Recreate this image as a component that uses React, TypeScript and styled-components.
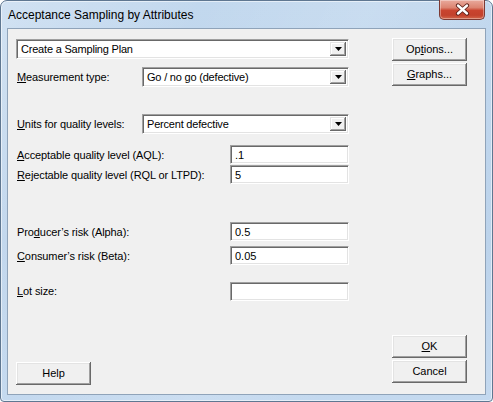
import React from 'react';
import styled, { createGlobalStyle } from 'styled-components';

const Global = createGlobalStyle`
  html, body { margin: 0; padding: 0; background: #ffffff; }
  body { width: 493px; height: 402px; overflow: hidden; }
  * { box-sizing: border-box; }
`;

const Window = styled.div`
  width: 493px;
  height: 402px;
  border: 1px solid #5f7791;
  border-radius: 7px 7px 4px 4px;
  background:
    linear-gradient(115deg, rgba(255,255,255,0.25) 0%, rgba(255,255,255,0) 30%, rgba(255,255,255,0.12) 55%, rgba(255,255,255,0) 75%),
    linear-gradient(180deg, #c2d8ee 0%, #bcd3eb 60%, #c4d9ef 100%);
  display: flex;
  flex-direction: column;
  font-family: "Liberation Sans", Arial, sans-serif;
  color: #000;
  box-shadow: inset 0 0 0 1px rgba(255,255,255,0.55);
`;

const TitleBar = styled.div`
  height: 27px;
  display: flex;
  align-items: flex-start;
  padding-left: 7px;
`;

const Title = styled.div`
  flex: 1;
  height: 27px;
  display: flex;
  align-items: center;
  padding-top: 1px;
  font-size: 12px;
  color: #000;
`;

const CloseButton = styled.div`
  width: 46px;
  height: 20px;
  margin-top: -1px;
  margin-right: 7px;
  border: 1px solid #7d3a33;
  border-top: none;
  border-radius: 0 0 5px 5px;
  background: linear-gradient(180deg, #e9aa9d 0%, #dc8471 40%, #c9442f 55%, #c3412c 80%, #d2664a 100%);
  box-shadow: inset 0 0 0 1px rgba(255,255,255,0.35);
  display: flex;
  align-items: center;
  justify-content: center;
`;

const Client = styled.div`
  flex: 1;
  margin: 0 6px 6px 6px;
  border: 1px solid #8fa3b9;
  background: #f0f0f0;
  display: flex;
  justify-content: space-between;
  padding: 9px 18px 9px 8px;
`;

const LeftPane = styled.div`
  width: 333px;
  display: flex;
  flex-direction: column;
`;

const RightPane = styled.div`
  width: 75px;
  display: flex;
  flex-direction: column;
  gap: 2px;
  padding-bottom: 2px;
`;

const Row = styled.div<{ $top: number; $h?: number }>`
  display: flex;
  align-items: center;
  height: ${p => p.$h ?? 20}px;
  margin-top: ${p => p.$top}px;
`;

const Label = styled.div`
  flex: 1;
  font-size: 11px;
  letter-spacing: -0.1px;
  padding-left: 1px;
  white-space: nowrap;
`;

const Key = styled.span`
  text-decoration: underline;
  text-underline-offset: 1px;
`;

const sunken = `
  background: #ffffff;
  border-top: 1px solid #a0a0a0;
  border-left: 1px solid #a0a0a0;
  border-bottom: 1px solid #ffffff;
  border-right: 1px solid #ffffff;
  box-shadow: inset 1px 1px 0 #696969, inset -1px -1px 0 #e3e3e3;
`;

const Combo = styled.div<{ $w: number }>`
  ${sunken}
  width: ${p => p.$w}px;
  height: 20px;
  display: flex;
  align-items: stretch;
  padding: 2px;
`;

const ComboText = styled.div`
  flex: 1;
  font-size: 11px;
  letter-spacing: -0.2px;
  display: flex;
  align-items: center;
  padding-left: 2px;
  white-space: nowrap;
`;

const ComboArrow = styled.div`
  width: 16px;
  background: #f0f0f0;
  box-shadow: inset -1px -1px 0 #696969, inset 1px 1px 0 #e3e3e3, inset -2px -2px 0 #a0a0a0, inset 2px 2px 0 #ffffff;
  display: flex;
  align-items: center;
  justify-content: center;
`;

const TextBox = styled.div`
  ${sunken}
  width: 119px;
  height: 19px;
  font-size: 11px;
  display: flex;
  align-items: center;
  padding-left: 4px;
`;

const Button = styled.div`
  width: 75px;
  height: 23px;
  background: #f0f0f0;
  box-shadow: inset -1px -1px 0 #696969, inset 1px 1px 0 #ffffff, inset -2px -2px 0 #a0a0a0, inset 2px 2px 0 #e3e3e3;
  font-size: 11px;
  display: flex;
  align-items: center;
  justify-content: center;
  padding-bottom: 1px;
`;

const Spacer = styled.div`
  flex: 1;
`;

const Arrow = () => (
  <svg width="7" height="4" viewBox="0 0 7 4">
    <path d="M0 0 H7 L3.5 4 Z" fill="#000" />
  </svg>
);

const CloseGlyph = () => (
  <svg width="15" height="13" viewBox="0 0 15 13">
    <path d="M3 2.5 L12 10.5 M12 2.5 L3 10.5" stroke="#5a1f18" strokeWidth="4.2" strokeLinecap="round" />
    <path d="M3 2.5 L12 10.5 M12 2.5 L3 10.5" stroke="#ffffff" strokeWidth="2.4" strokeLinecap="round" />
  </svg>
);

const Dropdown: React.FC<{ w: number; text: string }> = ({ w, text }) => (
  <Combo $w={w}>
    <ComboText>{text}</ComboText>
    <ComboArrow>
      <Arrow />
    </ComboArrow>
  </Combo>
);

export default function App() {
  return (
    <>
      <Global />
      <Window>
        <TitleBar>
          <Title>Acceptance Sampling by Attributes</Title>
          <CloseButton>
            <CloseGlyph />
          </CloseButton>
        </TitleBar>
        <Client>
          <LeftPane>
            <Row $top={1}>
              <Dropdown w={333} text="Create a Sampling Plan" />
            </Row>
            <Row $top={8}>
              <Label><Key>M</Key>easurement type:</Label>
              <Dropdown w={207} text="Go / no go (defective)" />
            </Row>
            <Row $top={27}>
              <Label><Key>U</Key>nits for quality levels:</Label>
              <Dropdown w={207} text="Percent defective" />
            </Row>
            <Row $top={11} $h={19}>
              <Label><Key>A</Key>cceptable quality level (AQL):</Label>
              <TextBox>.1</TextBox>
            </Row>
            <Row $top={1} $h={19}>
              <Label><Key>R</Key>ejectable quality level (RQL or LTPD):</Label>
              <TextBox>5</TextBox>
            </Row>
            <Row $top={38} $h={19}>
              <Label>Pro<Key>d</Key>ucer’s risk (Alpha):</Label>
              <TextBox>0.5</TextBox>
            </Row>
            <Row $top={5} $h={19}>
              <Label><Key>C</Key>onsumer’s risk (Beta):</Label>
              <TextBox>0.05</TextBox>
            </Row>
            <Row $top={16} $h={20}>
              <Label><Key>L</Key>ot size:</Label>
              <TextBox />
            </Row>
            <Spacer />
            <Button>Help</Button>
          </LeftPane>
          <RightPane>
            <Button>Op<Key>t</Key>ions...</Button>
            <Button><Key>G</Key>raphs...</Button>
            <Spacer />
            <Button><Key>O</Key>K</Button>
            <Button>Cancel</Button>
          </RightPane>
        </Client>
      </Window>
    </>
  );
}
